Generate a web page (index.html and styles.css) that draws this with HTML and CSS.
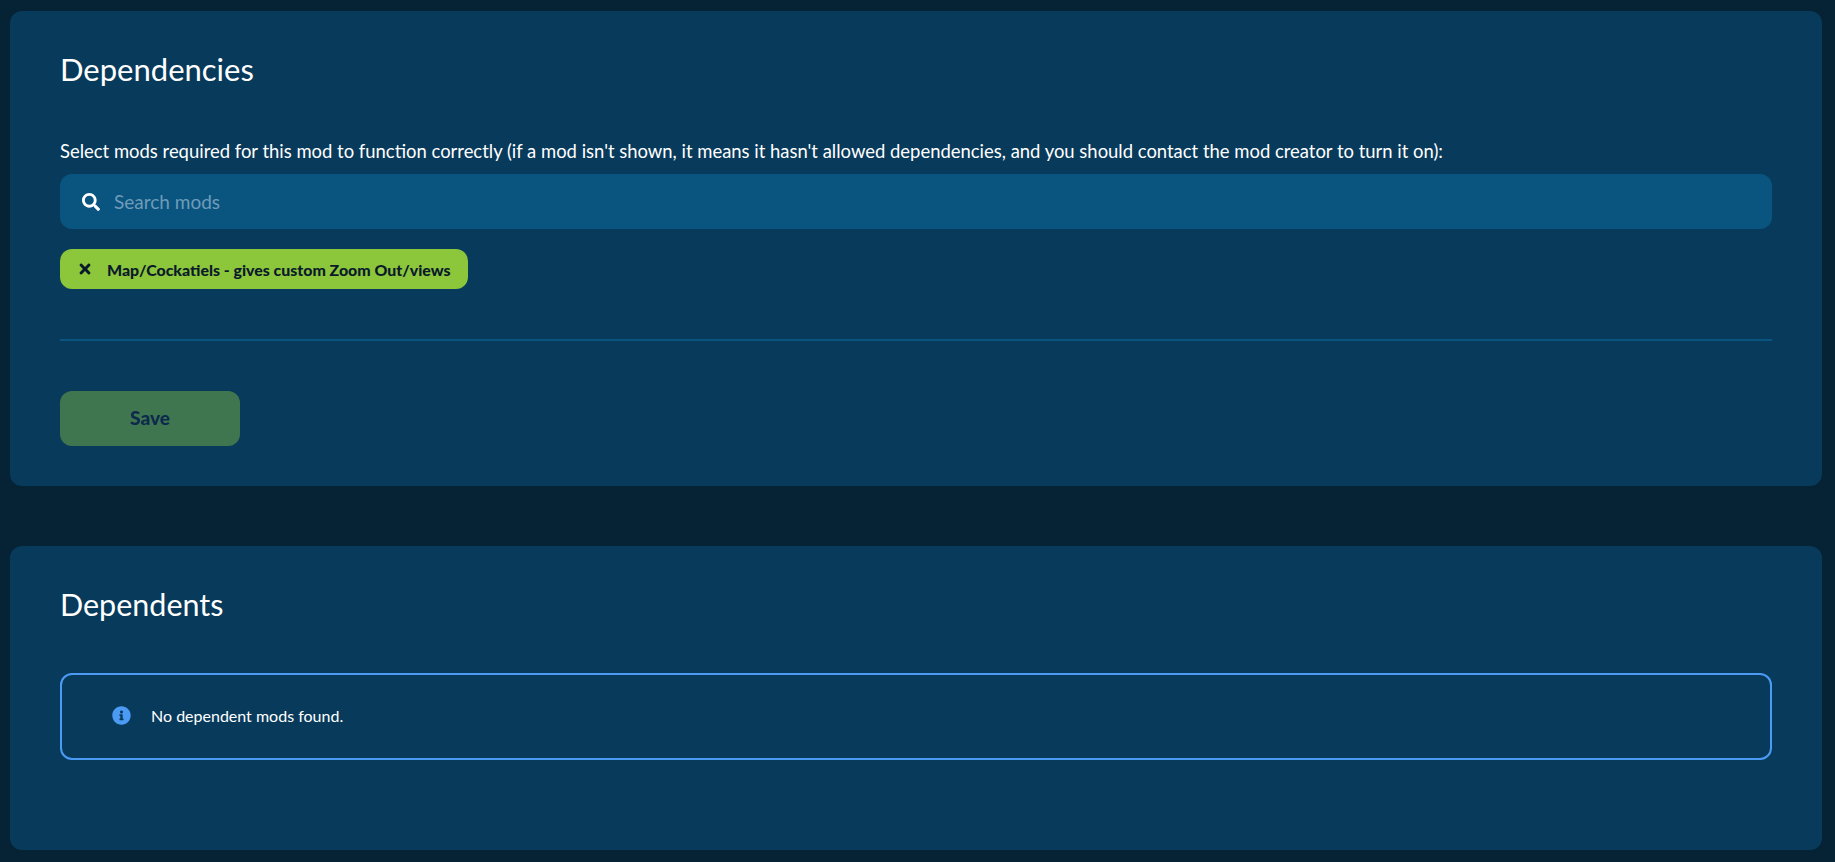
FILE: index.html
```html
<!DOCTYPE html>
<html>
<head>
    <link rel="stylesheet" href="styles.css">
</head>
<body>
    <section class="card">
        <h2 class="title">Dependencies</h2>
        <p class="hint">Select mods required for this mod to function correctly (if a mod isn't shown, it means it hasn't allowed dependencies, and you should contact the mod creator to turn it on):</p>
        <div class="search">
            <svg class="search-icon" viewBox="0 0 512 512"><path d="M505 442.7L405.3 343c-4.5-4.5-10.6-7-17-7H372c27.6-35.3 44-79.7 44-128C416 93.1 322.9 0 208 0S0 93.1 0 208s93.1 208 208 208c48.3 0 92.7-16.4 128-44v16.3c0 6.4 2.5 12.5 7 17l99.7 99.7c9.4 9.4 24.6 9.4 33.9 0l28.3-28.3c9.4-9.4 9.4-24.6.1-34zM208 336c-70.7 0-128-57.2-128-128 0-70.7 57.2-128 128-128 70.7 0 128 57.2 128 128 0 70.7-57.2 128-128 128z"/></svg>
            <input class="search-input" type="text" placeholder="Search mods">
        </div>
        <div class="chips">
            <div class="chip">
                <svg class="chip-icon" viewBox="0 0 352 512"><path d="M242.72 256l100.07-100.07c12.28-12.28 12.28-32.19 0-44.48l-22.24-22.24c-12.28-12.28-32.19-12.28-44.48 0L176 189.28 75.93 89.21c-12.28-12.28-32.19-12.28-44.48 0L9.21 111.45c-12.28 12.28-12.28 32.19 0 44.48L109.28 256 9.21 356.07c-12.28 12.28-12.28 32.19 0 44.48l22.24 22.24c12.28 12.28 32.2 12.28 44.48 0L176 322.72l100.07 100.07c12.28 12.28 32.2 12.28 44.48 0l22.24-22.24c12.28-12.28 12.28-32.19 0-44.48L242.72 256z"/></svg>
                <span>Map/Cockatiels - gives custom Zoom Out/views</span>
            </div>
        </div>
        <hr class="divider">
        <button class="save">Save</button>
    </section>

    <section class="card card-low">
        <h2 class="title title-small">Dependents</h2>
        <div class="notice">
            <svg class="notice-icon" viewBox="0 0 512 512"><path d="M256 8C119.043 8 8 119.083 8 256c0 136.997 111.043 248 248 248s248-111.003 248-248C504 119.083 392.957 8 256 8zm0 110c23.196 0 42 18.804 42 42s-18.804 42-42 42-42-18.804-42-42 18.804-42 42-42zm56 254c0 6.627-5.373 12-12 12h-88c-6.627 0-12-5.373-12-12v-24c0-6.627 5.373-12 12-12h12v-64h-12c-6.627 0-12-5.373-12-12v-24c0-6.627 5.373-12 12-12h64c6.627 0 12 5.373 12 12v100h12c6.627 0 12 5.373 12 12v24z"/></svg>
            <span>No dependent mods found.</span>
        </div>
    </section>
</body>
</html>
```

FILE: styles.css
```css
body {
    background-color: #062335;
    color: #ffffff;
    font-family: 'Lato', 'Open Sans', sans-serif;
    margin: 0;
    padding: 11px 13px 12px 10px;
}
.card {
    background-color: #083a5b;
    border-radius: 12px;
    padding: 35px 50px 40px;
    height: 475px;
    box-sizing: border-box;
}
.card-low {
    height: 304px;
    margin-top: 60px;
}
.title {
    font-size: 31px;
    font-weight: 400;
    line-height: 46px;
    margin: 0;
}
.title-small {
    font-size: 30.5px;
}
.hint {
    font-size: 18.46px;
    line-height: 24px;
    margin: 47px 0 11px;
}
.search {
    display: flex;
    align-items: center;
    height: 55px;
    background-color: #0a5480;
    border-radius: 12px;
    padding-left: 22px;
}
.search-icon {
    width: 18px;
    height: 18px;
    fill: #ffffff;
}
.search-input {
    flex: 1;
    margin-left: 14px;
    background: none;
    border: none;
    outline: none;
    padding: 0;
    color: #ffffff;
    font-family: inherit;
    font-size: 19px;
}
.search-input::placeholder {
    color: #6f9cb8;
    opacity: 1;
}
.chips {
    display: flex;
    margin-top: 20px;
}
.chip {
    display: flex;
    align-items: center;
    height: 40px;
    padding: 0 17px 0 19px;
    background-color: #8cc63b;
    border-radius: 12px;
    color: #0a1a2a;
    font-size: 15.9px;
    font-weight: 900;
}
.chip-icon {
    width: 12px;
    height: 16px;
    margin-right: 16px;
    fill: #0a1a2a;
}
.divider {
    border: none;
    height: 2px;
    background-color: #0a5480;
    margin: 50px 0;
}
.save {
    display: block;
    width: 180px;
    height: 55px;
    padding: 0 0 2px;
    border: none;
    border-radius: 12px;
    background-color: #40764f;
    color: #0c2a4c;
    font-family: inherit;
    font-size: 19px;
    font-weight: 900;
}
.notice {
    display: flex;
    align-items: center;
    height: 87px;
    box-sizing: border-box;
    margin-top: 46px;
    padding: 0 0 2px 50px;
    border: 2px solid #4b9bf5;
    border-radius: 12px;
    font-size: 16px;
}
.notice-icon {
    width: 19px;
    height: 19px;
    margin-right: 20px;
    fill: #4b9bf5;
}
```
